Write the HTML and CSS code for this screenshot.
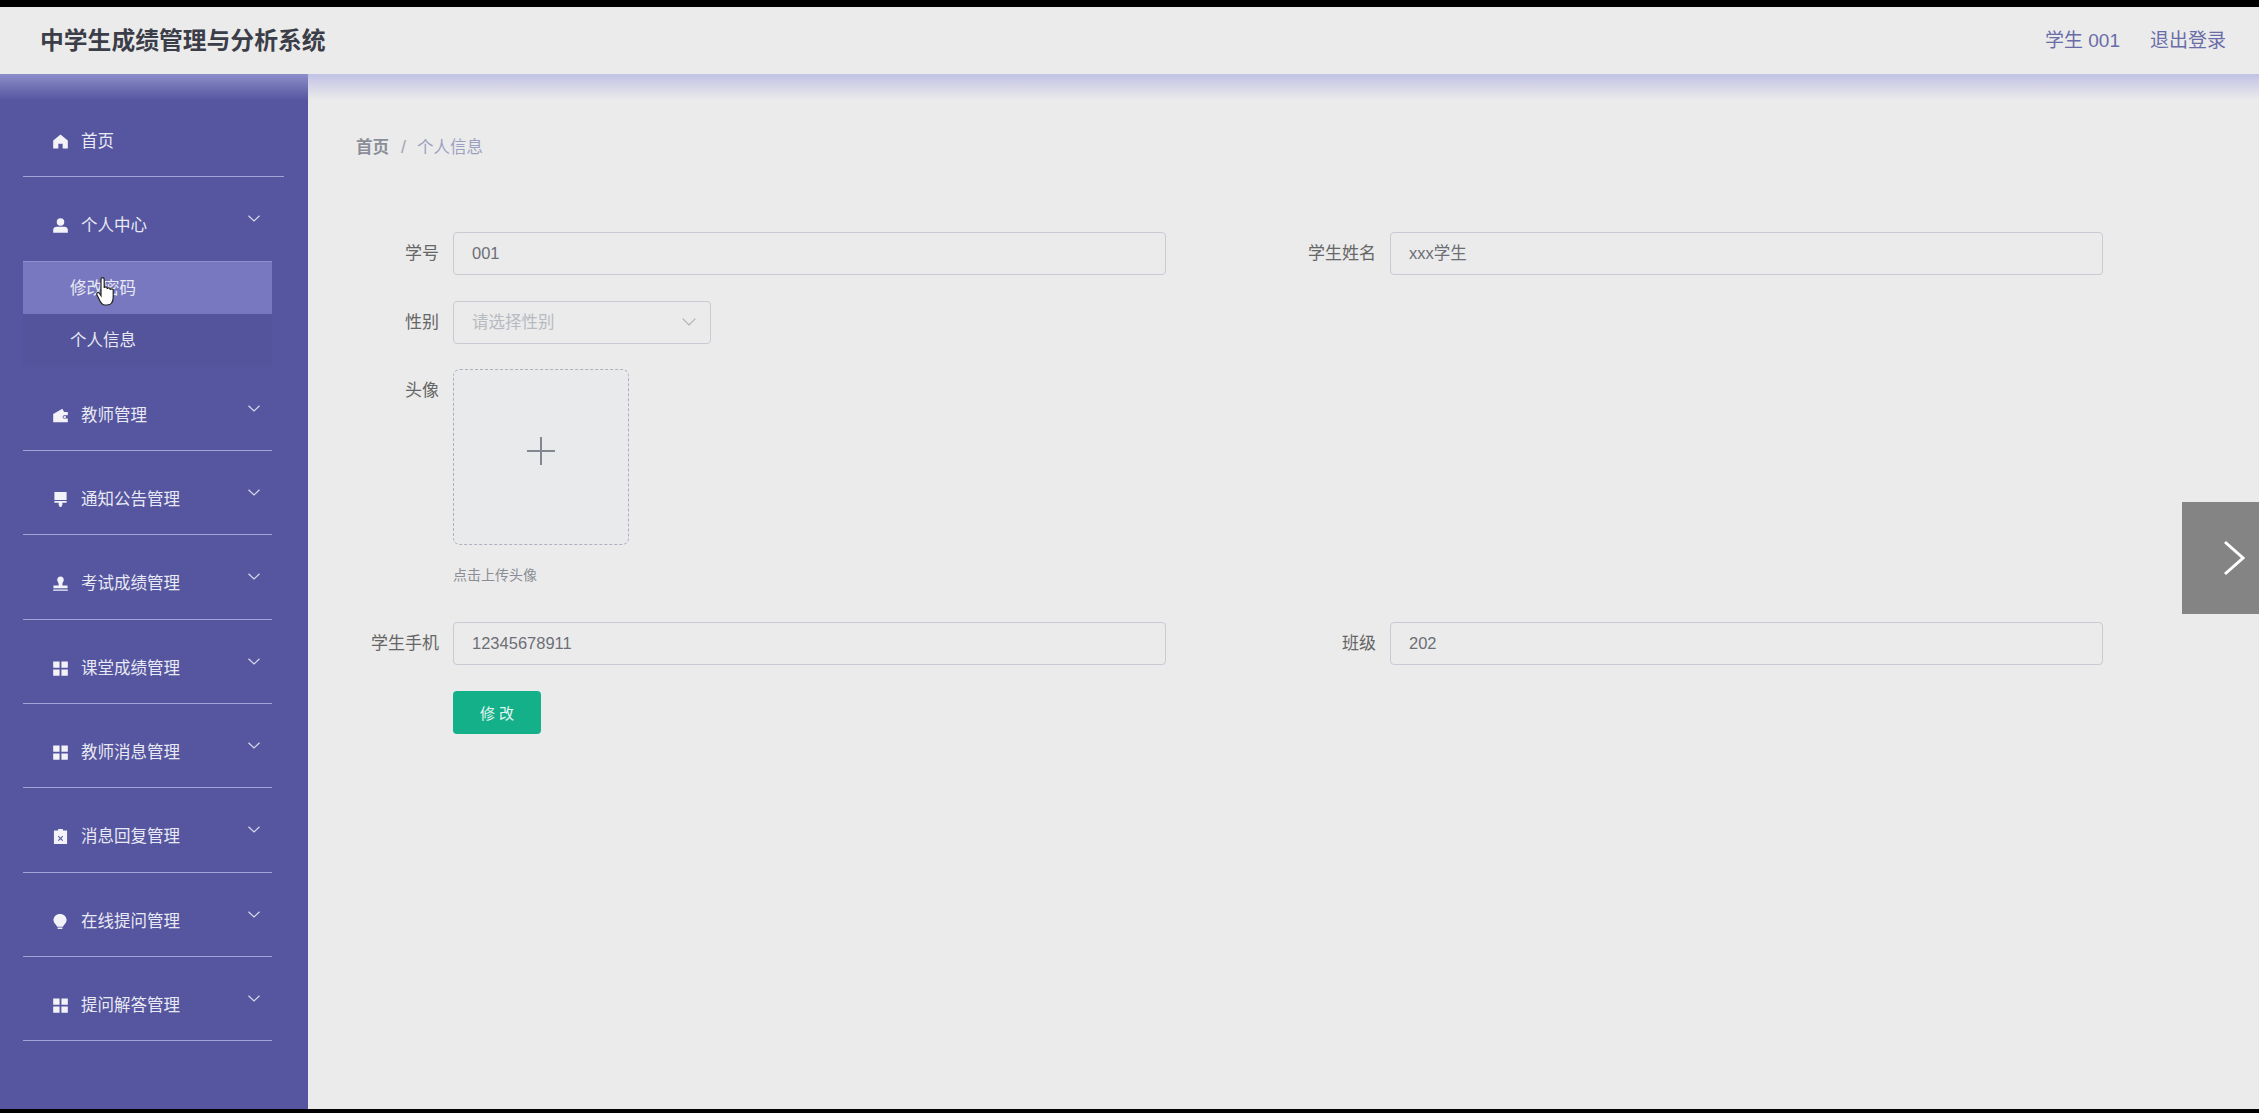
FILE: index.html
```html
<!DOCTYPE html>
<html>
<head>
    <meta charset="utf-8">
    <title>中学生成绩管理与分析系统</title>
    <link rel="stylesheet" href="styles.css">
</head>
<body>
    <div class="app">
        <header class="topbar">
            <div class="site-title">中学生成绩管理与分析系统</div>
            <div class="user-links">
                <span>学生 001</span>
                <a>退出登录</a>
            </div>
        </header>

        <div class="page">
            <aside class="sidebar">
                <div class="menu-item menu-home">
                    <div class="menu-title">
                        <svg class="icon" viewBox="0 0 16 16"><path d="M8 .5 15.800 7V15.500H10.300V10.500H5.700V15.500H.2V7z"/></svg>
                        <span>首页</span>
                    </div>
                </div>

                <div class="menu-item menu-open">
                    <div class="menu-title">
                        <svg class="icon" viewBox="0 0 16 16"><circle cx="8" cy="4.200" r="4"/><path d="M.2 15.800V12.600C.2 10.300 2 9.300 4 9.300H12C14 9.300 15.800 10.300 15.800 12.600V15.800z"/></svg>
                        <span>个人中心</span>
                        <svg class="chevron" viewBox="0 0 12 7"><path d="M.5.8 6 6 11.500.8"/></svg>
                    </div>
                    <div class="submenu">
                        <div class="sub-item active">修改密码</div>
                        <div class="sub-item">个人信息</div>
                    </div>
                    <svg class="hand" viewBox="0 0 24 30"><path d="M6 2.500c0-2.500 3.200-2.500 3.200 0v8.500c0-1.600 3-1.600 3 0v1c0-1.600 3-1.600 3 0v1c0-1.600 3-1.600 3 0v7c0 4.500-2 8-6.200 8h-2c-3 0-4-2-5-4l-3-6c-1-2 1-3.200 2.200-2l1.800 2.800z"/></svg>
                </div>

                <div class="menu-item">
                    <div class="menu-title">
                        <svg class="icon" viewBox="0 0 16 16"><path fill-rule="evenodd" d="M.2 6.500 10 .8 11.800 4.300H15.800V7.800H12C9.800 7.800 9.800 11.300 12 11.300H15.800V15.300H.2zM12.500 8.800A.9.9 0 1 0 12.500 10.400.9.9 0 1 0 12.500 8.800z"/></svg>
                        <span>教师管理</span>
                        <svg class="chevron" viewBox="0 0 12 7"><path d="M.5.8 6 6 11.500.8"/></svg>
                    </div>
                </div>

                <div class="menu-item">
                    <div class="menu-title">
                        <svg class="icon" viewBox="0 0 16 16"><path d="M1.500 0H14.500V8.500H1.500zM1.500 9.500H14.500V11.500H10V13.500L8.800 16H7.200L6 13.500V11.500H1.500z"/></svg>
                        <span>通知公告管理</span>
                        <svg class="chevron" viewBox="0 0 12 7"><path d="M.5.8 6 6 11.500.8"/></svg>
                    </div>
                </div>

                <div class="menu-item">
                    <div class="menu-title">
                        <svg class="icon" viewBox="0 0 16 16"><path d="M8 .5C10.200 .5 11.500 2 11.500 3.900 11.500 5.800 10 7 10 8.500V10H15.500V13H.5V10H6V8.500C6 7 4.500 5.800 4.500 3.900 4.500 2 5.800 .5 8 .5zM.2 14.300H15.800V15.700H.2z"/></svg>
                        <span>考试成绩管理</span>
                        <svg class="chevron" viewBox="0 0 12 7"><path d="M.5.8 6 6 11.500.8"/></svg>
                    </div>
                </div>

                <div class="menu-item">
                    <div class="menu-title">
                        <svg class="icon" viewBox="0 0 16 16"><path d="M.2.5H7V7.300H.2zM9 .5H15.800V7.300H9zM.2 9H7V15.800H.2zM9 9H15.800V15.800H9z"/></svg>
                        <span>课堂成绩管理</span>
                        <svg class="chevron" viewBox="0 0 12 7"><path d="M.5.8 6 6 11.500.8"/></svg>
                    </div>
                </div>

                <div class="menu-item">
                    <div class="menu-title">
                        <svg class="icon" viewBox="0 0 16 16"><path d="M.2.5H7V7.300H.2zM9 .5H15.800V7.300H9zM.2 9H7V15.800H.2zM9 9H15.800V15.800H9z"/></svg>
                        <span>教师消息管理</span>
                        <svg class="chevron" viewBox="0 0 12 7"><path d="M.5.8 6 6 11.500.8"/></svg>
                    </div>
                </div>

                <div class="menu-item">
                    <div class="menu-title">
                        <svg class="icon" viewBox="0 0 16 16"><path fill-rule="evenodd" d="M5.500 0H10.500V1.500H15V16H1V1.500H5.500zM6 7.200 5.200 8 7.200 10 5.200 12 6 12.800 8 10.800 10 12.800 10.800 12 8.800 10 10.800 8 10 7.200 8 9.200z"/></svg>
                        <span>消息回复管理</span>
                        <svg class="chevron" viewBox="0 0 12 7"><path d="M.5.8 6 6 11.500.8"/></svg>
                    </div>
                </div>

                <div class="menu-item">
                    <div class="menu-title">
                        <svg class="icon" viewBox="0 0 16 16"><path d="M7.500 0C11.500 0 14.500 2.800 14.500 6.500 14.500 9.500 12 11 10.500 13.500H4.500C3 11 .5 9.500 .5 6.500 .5 2.800 3.500 0 7.500 0zM5 14.500H10V16H5z"/></svg>
                        <span>在线提问管理</span>
                        <svg class="chevron" viewBox="0 0 12 7"><path d="M.5.8 6 6 11.500.8"/></svg>
                    </div>
                </div>

                <div class="menu-item">
                    <div class="menu-title">
                        <svg class="icon" viewBox="0 0 16 16"><path d="M.2.5H7V7.300H.2zM9 .5H15.800V7.300H9zM.2 9H7V15.800H.2zM9 9H15.800V15.800H9z"/></svg>
                        <span>提问解答管理</span>
                        <svg class="chevron" viewBox="0 0 12 7"><path d="M.5.8 6 6 11.500.8"/></svg>
                    </div>
                </div>
            </aside>

            <main class="content">
                <div class="breadcrumb">
                    <span class="crumb-home">首页</span>
                    <span class="crumb-sep">/</span>
                    <span class="crumb-current">个人信息</span>
                </div>

                <form class="info-form">
                    <div class="form-item">
                        <label>学号</label>
                        <div class="field">001</div>
                    </div>
                    <div class="form-item">
                        <label>学生姓名</label>
                        <div class="field">xxx学生</div>
                    </div>

                    <div class="form-item full">
                        <label>性别</label>
                        <div class="field select">
                            <span>请选择性别</span>
                            <svg class="select-arrow" viewBox="0 0 14 8"><path d="M.7.7 7 7 13.300.7"/></svg>
                        </div>
                    </div>

                    <div class="form-item full">
                        <label>头像</label>
                        <div class="upload-wrap">
                            <div class="upload">
                                <svg class="plus" viewBox="0 0 28 28"><path d="M14 0V28M0 14H28"/></svg>
                            </div>
                            <div class="upload-hint">点击上传头像</div>
                        </div>
                    </div>

                    <div class="form-item">
                        <label>学生手机</label>
                        <div class="field">12345678911</div>
                    </div>
                    <div class="form-item">
                        <label>班级</label>
                        <div class="field">202</div>
                    </div>

                    <div class="form-item full">
                        <label></label>
                        <button class="submit-btn" type="button">修 改</button>
                    </div>
                </form>
            </main>
        </div>

        <div class="next-btn">
            <svg viewBox="0 0 22 36"><path d="M2 2 20 18 2 34"/></svg>
        </div>
    </div>
</body>
</html>
```

FILE: styles.css
```css
* {
    box-sizing: border-box;
    padding: 0;
    margin: 0
}

html,
body {
    height: 100%;
    overflow: hidden
}

body {
    background-color: #000;
    padding: 7px 0 4px;
    font-family: "Liberation Sans", "Noto Sans CJK SC", sans-serif;
    font-size: 16.5px
}

.app {
    position: relative;
    display: flex;
    flex-direction: column;
    height: 100%;
    background-color: #ebebeb
}

.topbar {
    position: relative;
    display: flex;
    flex: none;
    justify-content: space-between;
    align-items: center;
    height: 67px;
    padding: 0 33px 5px 40px;
    background-color: #ebebeb
}

.topbar::after {
    position: absolute;
    content: "";
    left: 0;
    right: 0;
    top: 100%;
    height: 26px;
    background: linear-gradient(rgba(170, 172, 225, 0.65), rgba(170, 172, 225, 0));
    z-index: 2
}

.site-title {
    font-size: 23.8px;
    font-weight: bold;
    color: #3b3e48
}

.user-links {
    display: flex;
    gap: 30px;
    font-size: 19px;
    color: #6a6ca8
}

.page {
    display: flex;
    flex: 1;
    min-height: 0
}

.sidebar {
    flex: none;
    width: 308px;
    padding: 18.5px 0 0 23px;
    background-color: #55569f
}

.menu-item {
    position: relative;
    width: 249px;
    border-bottom: 1px solid #a2a3d6
}

.menu-home {
    width: 261px
}

.menu-open {
    border-bottom: none
}

.menu-title {
    display: flex;
    align-items: flex-start;
    height: 83.3px;
    padding: 38px 0 0 30px;
    line-height: 20px;
    color: #e9e9f3
}

.menu-open .menu-title {
    height: 84px
}

.icon {
    flex: none;
    width: 15px;
    height: 15px;
    margin: 3px 13px 0 0;
    fill: #f2f2f8
}

.chevron {
    position: absolute;
    left: 225px;
    top: 38px;
    width: 12px;
    height: 7px;
    fill: none;
    stroke: #d9d9ec;
    stroke-width: 1.2
}

.submenu {
    background-color: #53549c
}

.sub-item {
    height: 53px;
    padding-left: 47px;
    line-height: 53px;
    color: #e9e9f3
}

.sub-item.active {
    background-color: #7878c0;
    border-top: 1px solid #8f8fd0
}

.hand {
    position: absolute;
    left: 72px;
    top: 100px;
    width: 24px;
    height: 30px;
    fill: #fff;
    stroke: #222;
    stroke-width: 1.2
}

.content {
    flex: 1;
    padding: 61px 0 0 48px
}

.breadcrumb {
    display: flex;
    height: 24px;
    line-height: 24px;
    color: #8d919c
}

.crumb-home {
    color: #8a8e98;
    font-weight: bold
}

.crumb-sep {
    margin: 0 11px 0 12px;
    font-size: 18px;
    color: #a3a6b0
}

.crumb-current {
    color: #9d9fc0
}

.info-form {
    display: grid;
    grid-template-columns: 810px 810px;
    column-gap: 127px;
    row-gap: 25.5px;
    margin-top: 73px
}

.form-item {
    display: flex
}

.form-item.full {
    grid-column: 1 / -1
}

.form-item label {
    flex: none;
    width: 97px;
    padding-right: 14px;
    line-height: 43px;
    font-size: 17px;
    text-align: right;
    color: #666
}

.field {
    flex: 1;
    height: 43px;
    padding-left: 18px;
    border: 1px solid #c9cad3;
    border-radius: 4px;
    line-height: 41px;
    color: #6d6f76
}

.select {
    display: flex;
    flex: none;
    justify-content: space-between;
    align-items: center;
    width: 258px;
    padding-right: 14px;
    color: #b8bac2
}

.select-arrow {
    width: 14px;
    height: 8px;
    fill: none;
    stroke: #b0b2ba;
    stroke-width: 1.2
}

.upload {
    display: flex;
    justify-content: center;
    align-items: center;
    width: 176px;
    height: 176px;
    padding-bottom: 12px;
    border: 1px dashed #aeb0bc;
    border-radius: 7px;
    background-color: #e9eaec
}

.plus {
    width: 28px;
    height: 28px;
    fill: none;
    stroke: #838790;
    stroke-width: 2
}

.upload-hint {
    margin-top: 20px;
    padding-bottom: 11.5px;
    font-size: 14px;
    line-height: 20px;
    color: #8a8d95
}

.submit-btn {
    width: 88px;
    height: 43px;
    border: none;
    border-radius: 4px;
    background-color: #14b08a;
    font-family: inherit;
    font-size: 15px;
    color: #e6f7f1
}

.next-btn {
    position: absolute;
    right: 0;
    top: 495px;
    display: flex;
    align-items: center;
    justify-content: flex-end;
    width: 77px;
    height: 112px;
    padding-right: 14px;
    background-color: #848484
}

.next-btn svg {
    width: 22px;
    height: 36px;
    fill: none;
    stroke: #fff;
    stroke-width: 3
}
```
